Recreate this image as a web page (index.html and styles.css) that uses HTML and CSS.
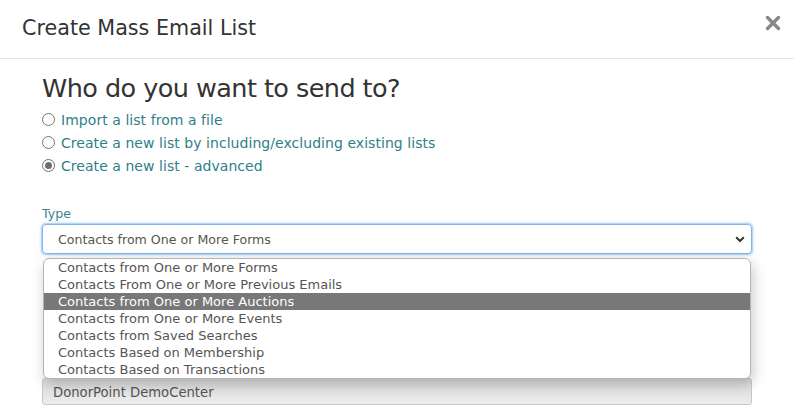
FILE: index.html
```html
<!DOCTYPE html>
<html>
<head>
<meta charset="utf-8">
<link rel="stylesheet" href="styles.css">
</head>
<body>
<div class="modal">
  <div class="modal-header">
    <h1 class="title">Create Mass Email List</h1>
    <button class="close" aria-label="Close">
      <svg width="16" height="16" viewBox="0 0 16 16"><path d="M2.5 2.5 L13.5 13.5 M13.5 2.5 L2.5 13.5" stroke="#888" stroke-width="3.4" stroke-linecap="round"/></svg>
    </button>
  </div>
  <div class="modal-body">
    <h2 class="question">Who do you want to send to?</h2>
    <div class="radios">
      <label class="radio"><span class="dot"></span><span>Import a list from a file</span></label>
      <label class="radio"><span class="dot"></span><span>Create a new list by including/excluding existing lists</span></label>
      <label class="radio"><span class="dot checked"></span><span>Create a new list - advanced</span></label>
    </div>
    <div class="field">
      <div class="label">Type</div>
      <div class="select-wrap">
        <div class="select">
          <span>Contacts from One or More Forms</span>
          <svg class="chev" width="10" height="7" viewBox="0 0 10 7"><path d="M1.2 1.2 L5 5 L8.8 1.2" fill="none" stroke="#333" stroke-width="2"/></svg>
        </div>
        <ul class="options">
          <li>Contacts from One or More Forms</li>
          <li>Contacts From One or More Previous Emails</li>
          <li class="active">Contacts from One or More Auctions</li>
          <li>Contacts from One or More Events</li>
          <li>Contacts from Saved Searches</li>
          <li>Contacts Based on Membership</li>
          <li>Contacts Based on Transactions</li>
        </ul>
      </div>
    </div>
    <div class="field2">
      <div class="label-mark"></div>
      <div class="input">DonorPoint DemoCenter</div>
    </div>
  </div>
</div>
</body>
</html>
```
FILE: styles.css
```css
* { box-sizing: border-box; }
html, body { margin: 0; padding: 0; background: #fff; }
body {
  font-family: "DejaVu Sans", sans-serif;
  color: #333;
  width: 794px;
  height: 419px;
  overflow: hidden;
}
.modal-header {
  height: 59px;
  border-bottom: 1px solid #e5e5e5;
  display: flex;
  align-items: flex-start;
  justify-content: space-between;
  padding: 0 13px 0 22px;
}
.title {
  margin: 0;
  padding-top: 15px;
  font-size: 20.7px;
  font-weight: normal;
  color: #333;
  line-height: 26px;
}
.close {
  border: 0;
  background: none;
  padding: 0;
  margin-top: 15px;
  width: 16px;
  height: 16px;
}
.close svg { display: block; }
.modal-body {
  padding: 12px 42px 0 42px;
}
.question {
  margin: 0;
  font-size: 25.5px;
  letter-spacing: -0.55px;
  font-weight: normal;
  line-height: 35px;
  color: #333;
}
.radios {
  display: flex;
  flex-direction: column;
  margin-top: 2px;
}
.radio {
  display: flex;
  align-items: center;
  height: 23px;
  font-size: 14px;
  letter-spacing: 0.05px;
  color: #2f7f89;
}
.dot {
  width: 13px;
  height: 13px;
  border: 1px solid #767676;
  border-radius: 50%;
  margin-right: 6px;
  flex: none;
  position: relative;
}
.dot.checked { border-color: #6e6e6e; }
.dot.checked::after {
  content: "";
  position: absolute;
  left: 2px; top: 2px;
  width: 7px; height: 7px;
  border-radius: 50%;
  background: #6e6e6e;
}
.field { margin-top: 28px; }
.label {
  font-size: 12.6px;
  color: #3f838c;
  line-height: 18px;
  height: 19px;
}
.select-wrap { position: relative; }
.select {
  height: 30px;
  border: 1px solid #7fb6ec;
  border-radius: 4px;
  box-shadow: 0 0 0 1px #b5d6f7, 0 0 3px 1px rgba(102,175,233,.5);
  display: flex;
  align-items: center;
  justify-content: space-between;
  padding: 0 6px 0 15px;
  font-size: 12.6px;
  color: #555;
}
.options {
  position: absolute;
  z-index: 2;
  left: 1px;
  right: 1px;
  top: 34px;
  margin: 0;
  padding: 0;
  list-style: none;
  background: #fff;
  border: 1px solid #b4b4b4;
  border-radius: 6px;
  box-shadow: 2px 5px 14px rgba(0,0,0,.22);
  overflow: hidden;
}
.options li {
  height: 17px;
  line-height: 17px;
  padding-left: 14px;
  font-size: 13px;
  color: #555;
}
.options li.active { background: #787878; color: #fff; }
.field2 { margin-top: 107px; }
.label-mark { height: 17px; }
.input {
  height: 27px;
  border: 1px solid #c8c8c8;
  border-radius: 3px;
  background: linear-gradient(#dcdcdc, #ececec);
  display: flex;
  align-items: center;
  padding: 2px 0 0 10px;
  font-size: 13.2px;
  color: #555;
}
```
